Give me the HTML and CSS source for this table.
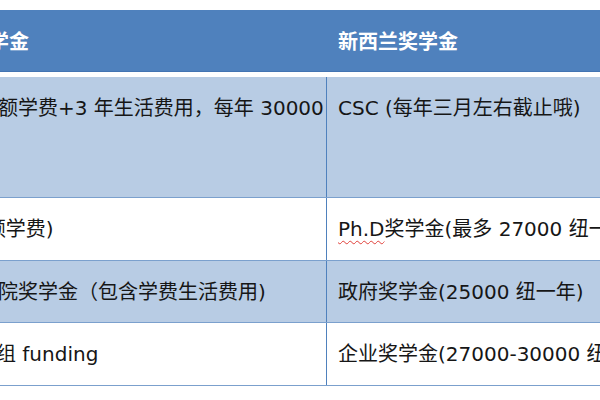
FILE: index.html
```html
<!DOCTYPE html>
<html lang="zh-CN">
<head>
<meta charset="utf-8">
<title>奖学金对比</title>
<link rel="stylesheet" href="styles.css">
</head>
<body>
<div class="table">
  <div class="row head">
    <div class="cell c1">AU奖学金</div>
    <div class="cell c2">新西兰奖学金</div>
  </div>
  <div class="row band tall">
    <div class="cell c1">提供全额学费+3 年生活费用，每年 30000</div>
    <div class="cell c2">CSC (每年三月左右截止哦)</div>
  </div>
  <div class="row plain">
    <div class="cell c1">(免全额学费)</div>
    <div class="cell c2"><span class="spell">Ph.D</span>奖学金(最多 27000 纽一年)</div>
  </div>
  <div class="row band short">
    <div class="cell c1">研究生院奖学金（包含学费生活费用)</div>
    <div class="cell c2">政府奖学金(25000 纽一年)</div>
  </div>
  <div class="row plain">
    <div class="cell c1">PI课题组 funding</div>
    <div class="cell c2">企业奖学金(27000-30000 纽一年)</div>
  </div>
</div>
</body>
</html>
```

FILE: styles.css
```css
html, body {
  margin: 0;
  padding: 0;
  background: #ffffff;
  overflow: hidden;
}

body {
  font-family: "DejaVu Sans", "Noto Sans CJK SC", sans-serif;
  font-size: 20px;
  line-height: 30px;
  color: #161616;
}

.table {
  margin: 10px 0 0 -73px;
  width: 820px;
}

.row {
  display: grid;
  grid-template-columns: 400px 1fr;
  box-sizing: border-box;
}

.cell {
  box-sizing: border-box;
  padding-left: 11px;
  white-space: nowrap;
  overflow: hidden;
}

.head {
  height: 67px;
  background: #4f81bd;
  border-bottom: 5px solid #ffffff;
  color: #ffffff;
  font-weight: 700;
}

.head .cell {
  display: flex;
  align-items: center;
  padding-top: 3px;
  border-bottom: 1px solid #4374b2;
}

.row.band,
.row.plain {
  border-bottom: 1px solid #7ba0cd;
}

.row.band {
  background: #b8cce4;
}

.row.plain {
  background: #ffffff;
  height: 63px;
}

.row.tall {
  height: 121px;
}

.row.short {
  height: 62px;
}

.band .cell,
.plain .cell {
  padding-top: 16px;
}

.band .c1,
.plain .c1 {
  border-right: 1px solid #4f81bd;
}

.spell {
  text-decoration: underline wavy #e0403a;
  text-decoration-thickness: 1px;
  text-underline-offset: 4px;
}
```
